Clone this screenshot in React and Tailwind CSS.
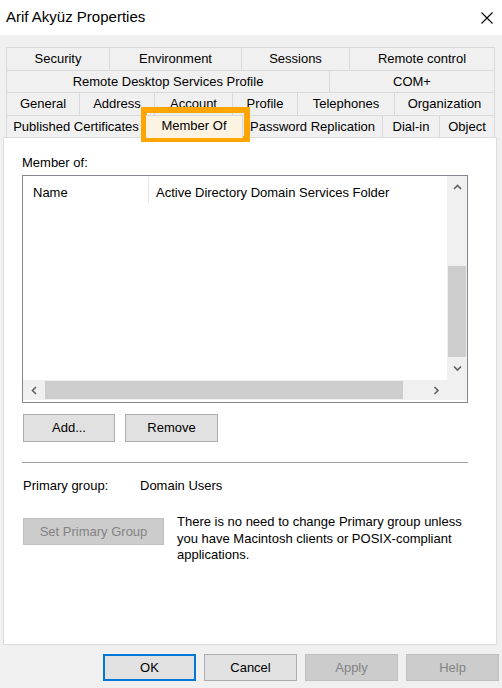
import React from "react";

const row1 = [
  ["Security", "w-[104px]"],
  ["Environment", "w-[132px]"],
  ["Sessions", "w-[108px]"],
  ["Remote control", "w-[145px]"],
];
const row2 = [
  ["Remote Desktop Services Profile", "w-[324px]"],
  ["COM+", "w-[165px]"],
];
const row3 = [
  ["General", "w-[74px]"],
  ["Address", "w-[75px]"],
  ["Account", "w-[78px]"],
  ["Profile", "w-[65px]"],
  ["Telephones", "w-[97px]"],
  ["Organization", "w-[100px]"],
];
const row4 = [
  ["Published Certificates", "w-[140px]"],
  ["Member Of", "w-[97px]", true],
  ["Password Replication", "w-[140px]"],
  ["Dial-in", "w-[57px]"],
  ["Object", "w-[55px]"],
];

function TabRow({ items, h }) {
  return (
    <div className={`flex ${h}`}>
      {items.map(([label, w, sel], i) => (
        <div
          key={label}
          className={`${w} ${i === 0 ? "border-l" : ""} ${
            sel ? "bg-[#fcf3e3] relative z-10 -mb-[1px]" : "bg-[#f0f0f0]"
          } flex items-center justify-center border-t border-r border-[#d9d9d9] whitespace-nowrap`}
        >
          <span className={sel ? "-mt-[3px]" : ""}>{label}</span>
        </div>
      ))}
    </div>
  );
}

function Chevron({ dir }) {
  const paths = {
    up: "M1 5 L4.5 1.5 L8 5",
    down: "M1 1.5 L4.5 5 L8 1.5",
    left: "M5 1 L1.5 4.5 L5 8",
    right: "M1.5 1 L5 4.5 L1.5 8",
  };
  const vert = dir === "up" || dir === "down";
  return (
    <svg
      width={vert ? 9 : 7}
      height={vert ? 7 : 9}
      viewBox={vert ? "0 0 9 7" : "0 0 7 9"}
      fill="none"
      stroke="#606060"
      strokeWidth="1.6"
    >
      <path d={paths[dir]} />
    </svg>
  );
}

function Btn({ children, disabled, primary, className = "" }) {
  return (
    <div
      className={`flex items-center justify-center ${
        disabled
          ? "bg-[#cccccc] border border-[#bfbfbf] text-[#838383]"
          : primary
          ? "bg-[#e1e1e1] border-2 border-[#0078d7] text-black"
          : "bg-[#e1e1e1] border border-[#adadad] text-black"
      } ${className}`}
    >
      {children}
    </div>
  );
}

export default function App() {
  return (
    <div className="w-[502px] h-[688px] bg-[#f0f0f0] font-['Liberation_Sans',Arial,sans-serif] text-[13px] text-black flex flex-col overflow-hidden">
      {/* Title bar */}
      <div className="h-[35px] bg-white flex items-center justify-between pl-[6px] pr-[9px] shrink-0">
        <span className="text-[15px] leading-none -mt-[2px]">Arif Akyüz Properties</span>
        <svg width="12" height="12" viewBox="0 0 12 12" stroke="#000" strokeWidth="1.1">
          <path d="M0.5 0.5 L11.5 11.5 M11.5 0.5 L0.5 11.5" />
        </svg>
      </div>

      {/* Tabs */}
      <div className="relative z-10 mt-[12px] ml-[6px] w-[489px] shrink-0">
        <TabRow items={row1} h="h-[23px]" />
        <TabRow items={row2} h="h-[22px]" />
        <TabRow items={row3} h="h-[23px]" />
        <TabRow items={row4} h="h-[22px]" />
        {/* Orange highlight */}
        <div className="absolute left-[135px] top-[60px] w-[109px] h-[35px] border-[6px] border-[#ffa500] pointer-events-none" />
      </div>

      {/* Panel */}
      <div className="ml-[3px] w-[494px] h-[508px] bg-white border border-[#dcdcdc] pl-[18px] pr-[28px] shrink-0 flex flex-col">
        <div className="mt-[17px] h-[16px] leading-[16px]">Member of:</div>

        {/* List box */}
        <div className="mt-[4px] h-[228px] border border-[#828790] flex flex-col">
          <div className="flex h-[204px]">
            <div className="flex-1 bg-white">
              <div className="h-[27px] flex items-stretch pt-[1px]">
                <div className="w-[126px] pl-[10px] flex items-center pt-[6px] border-r border-[#e5e5e5]">Name</div>
                <div className="pl-[7px] flex items-center pt-[6px]">Active Directory Domain Services Folder</div>
              </div>
            </div>
            <div className="w-[20px] bg-[#f0f0f0] flex flex-col">
              <div className="h-[22px] flex items-center justify-center">
                <Chevron dir="up" />
              </div>
              <div className="h-[68px]" />
              <div className="h-[91px] bg-[#cdcdcd] mx-[1px]" />
              <div className="flex-1 flex items-center justify-center">
                <Chevron dir="down" />
              </div>
            </div>
          </div>
          <div className="flex h-[20px]">
            <div className="flex-1 bg-[#f0f0f0] flex">
              <div className="w-[22px] flex items-center justify-center">
                <Chevron dir="left" />
              </div>
              <div className="w-[358px] bg-[#cdcdcd] my-[1px]" />
              <div className="flex-1" />
              <div className="w-[22px] flex items-center justify-center">
                <Chevron dir="right" />
              </div>
            </div>
            <div className="w-[20px] bg-[#f0f0f0]" />
          </div>
          <div className="flex-1 bg-white" />
        </div>

        {/* Add / Remove */}
        <div className="mt-[11px] flex gap-[10px] ml-[1px]">
          <Btn className="w-[92px] h-[28px]">Add...</Btn>
          <Btn className="w-[93px] h-[28px]">Remove</Btn>
        </div>

        <div className="mt-[20px] h-px bg-[#a0a0a0]" />

        <div className="mt-[15px] h-[16px] leading-[16px] flex ml-[1px]">
          <span className="w-[117px]">Primary group:</span>
          <span>Domain Users</span>
        </div>

        <div className="mt-[20px] flex items-start ml-[1px]">
          <Btn disabled className="mt-[4px] w-[141px] h-[27px]">Set Primary Group</Btn>
          <div className="ml-[13px] leading-[16.5px]">
            There is no need to change Primary group unless
            <br />
            you have Macintosh clients or POSIX-compliant
            <br />
            applications.
          </div>
        </div>
      </div>

      {/* Footer */}
      <div className="mt-[9px] flex justify-end gap-[8px] pr-[3px]">
        <Btn primary className="w-[93px] h-[27px]">OK</Btn>
        <Btn className="w-[93px] h-[27px]">Cancel</Btn>
        <Btn disabled className="w-[93px] h-[27px]">Apply</Btn>
        <Btn disabled className="w-[93px] h-[27px]">Help</Btn>
      </div>
    </div>
  );
}
